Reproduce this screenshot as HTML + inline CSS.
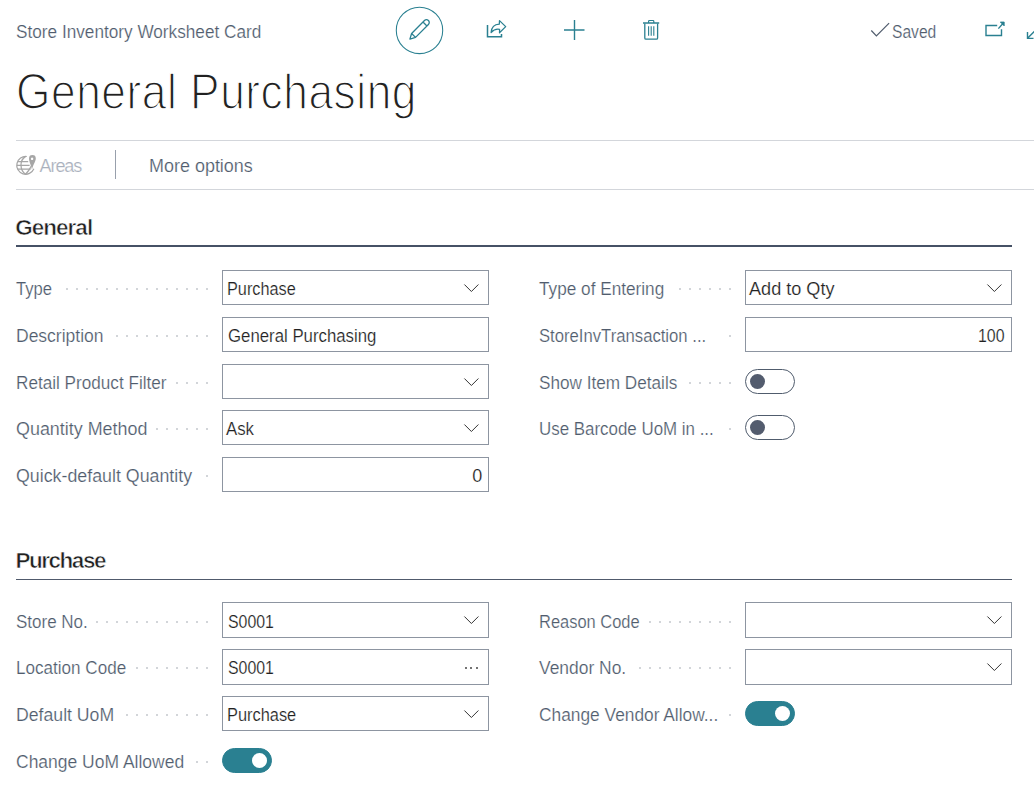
<!DOCTYPE html>
<html><head><meta charset="utf-8"><style>
html,body{margin:0;padding:0;background:#fff;width:1034px;height:791px;overflow:hidden;position:relative;font-family:"Liberation Sans",sans-serif;}
.t{position:absolute;white-space:nowrap;-webkit-text-stroke:0.2px #fff;}
.d{position:absolute;width:2px;height:2px;border-radius:1px;background:#c3c7cd;}
.ed{position:absolute;width:2px;height:2px;border-radius:1px;background:#444;}
.box{position:absolute;width:265px;height:33px;border:1px solid #8d95a1;}
.chev{position:absolute;}
.hl{position:absolute;height:1px;background:#d3d6db;}
.tg{position:absolute;width:48px;height:23px;border:1px solid #505c6d;border-radius:13px;box-sizing:content-box;}
.tg b{position:absolute;left:4px;top:4px;width:15px;height:15px;border-radius:50%;background:#535c6e;}
.tg.on{background:#2a8091;border-color:#2a8091;}
.tg.on b{left:29px;background:#fff;}
svg.ic{position:absolute;overflow:visible;}
</style></head><body>
<div class="hl" style="left:16px;top:140px;width:1018px"></div>
<div class="hl" style="left:16px;top:189px;width:1018px"></div>
<div style="position:absolute;left:115px;top:150px;width:1px;height:29px;background:#98a0ac"></div>
<div style="position:absolute;left:16px;top:245px;width:996px;height:2px;background:#465165"></div>
<div style="position:absolute;left:16px;top:579px;width:996px;height:1px;background:#505a6c"></div>
<svg class="ic" style="left:0;top:0" width="1034" height="200" viewBox="0 0 1034 200">
 <g fill="none" stroke="#2a8091" stroke-width="1.3" stroke-linejoin="round">
  <circle cx="419.5" cy="30.4" r="23.2" stroke-width="1.05"/>
  <g transform="translate(409.9,39.1) rotate(-45)">
   <path d="M0,0 L5.2,-2.8 L23.4,-2.8 A2.8,2.8 0 0 1 23.4,2.8 L5.2,2.8 Z M5.2,-2.8 L5.2,2.8 M21.3,-2.8 L21.3,2.8"/>
  </g>
  <path d="M487.5,25 L487.5,36.8 L501.5,36.8 L501.5,34" stroke-width="1.5" stroke-linejoin="miter"/>
  <path d="M491.1,32.5 C491.5,27 494.5,24.3 499.3,24.1 L499.5,20.6 L505.7,26.6 L499.5,32.8 L499.6,29.3 C496,28.6 493.5,29.8 491.1,32.5 Z" stroke-width="1.25"/>
  <path d="M574.5,20 L574.5,40 M564,30 L584.5,30" stroke-width="1.4"/>
  <path d="M643,23 L659.2,23" stroke-width="1.5"/>
  <path d="M648.6,23 L648.6,21.3 Q648.6,20.5 649.4,20.5 L653,20.5 Q653.8,20.5 653.8,21.3 L653.8,23" stroke-width="1.2"/>
  <path d="M644.8,23.5 L644.8,38 Q644.8,39.2 646,39.2 L656.4,39.2 Q657.6,39.2 657.6,38 L657.6,23.5" stroke-width="1.3"/>
  <path d="M648.6,26.2 L648.6,35.8 M651.2,26.2 L651.2,35.8 M653.8,26.2 L653.8,35.8" stroke-width="1.1"/>
  <path d="M997.2,25.5 L986,25.5 L986,35.5 L1001.5,35.5 L1001.5,29.2" stroke-width="1.4" stroke-linejoin="miter"/>
  <path d="M998.4,28.6 L1003.2,23.3" stroke-width="1.4"/>
  <path d="M1000.3,22 L1004.2,22 L1004.2,25.9 Z" fill="#2a8091" stroke-width="0.8"/>
  <path d="M1027.5,32 L1027.5,38.4 L1033.5,38.4 M1027.8,38 L1035,30.8" stroke-width="1.4" stroke-linejoin="miter"/>
 </g>
 <path d="M871.3,30.5 L876.4,35.8 L889.1,23.1" fill="none" stroke="#505c6d" stroke-width="1.2"/>
 <g fill="none" stroke="#a6a6a6" stroke-width="1.25">
  <path d="M26.8,156.5 A8.9,8.9 0 1 0 33.9,168.8"/>
  <path d="M18,161.5 L28.2,161.5 M16.6,165.3 L29.6,165.3 M17.6,169.1 L30.6,169.1"/>
  <path d="M25.5,156.6 C19.5,160 19.5,170 25.5,174.2 C29.5,170 30.5,168 31,166"/>
 </g>
 <path d="M32.4,155.1 A3.4,3.4 0 0 1 35.8,158.5 C35.8,161 33.4,164 32,169.6 C30.6,164 29,161 29,158.5 A3.4,3.4 0 0 1 32.4,155.1 Z M32.1,157.6 A1.2,1.2 0 1 0 32.11,157.6 Z" fill="#a6a6a6" fill-rule="evenodd" stroke="#fff" stroke-width="0.6" paint-order="stroke"/>
</svg>

<div class="t" style="left:15.50px;top:22.00px;font-size:18px;line-height:20px;letter-spacing:0.000px;color:#505c6d;transform:scaleX(0.9553296724695254);transform-origin:0 0;">Store Inventory Worksheet Card</div>
<div class="t" style="left:892.40px;top:22.00px;font-size:18px;line-height:20px;letter-spacing:0.000px;color:#505c6d;transform:scaleX(0.8681167940427199);transform-origin:0 0;">Saved</div>
<div class="t" style="left:15.50px;top:64.00px;font-size:50px;line-height:56px;letter-spacing:0.620px;color:#212121;-webkit-text-stroke:1.5px #fff;transform:scaleX(0.885);transform-origin:0 0;">General Purchasing</div>
<div class="t" style="left:39.60px;top:156.00px;font-size:18px;line-height:20px;letter-spacing:-1.095px;color:#a9b0bc;">Areas</div>
<div class="t" style="left:148.80px;top:156.00px;font-size:18px;line-height:20px;letter-spacing:0.000px;color:#505c6d;transform:scaleX(0.9976931949250288);transform-origin:0 0;">More options</div>
<div class="t" style="left:15.20px;top:215.00px;font-size:22.5px;line-height:25px;letter-spacing:-0.969px;color:#212121;font-weight:700;-webkit-text-stroke:0.6px #fff;">General</div>
<div class="t" style="left:15.50px;top:548.00px;font-size:22.5px;line-height:25px;letter-spacing:-1.480px;color:#212121;font-weight:700;-webkit-text-stroke:0.6px #fff;">Purchase</div>
<div class="t" style="left:15.50px;top:279.00px;font-size:18px;line-height:20px;letter-spacing:0.000px;color:#505c6d;transform:scaleX(0.9216589861751153);transform-origin:0 0;">Type</div>
<i class="d" style="left:206px;top:288px"></i>
<i class="d" style="left:196px;top:288px"></i>
<i class="d" style="left:186px;top:288px"></i>
<i class="d" style="left:176px;top:288px"></i>
<i class="d" style="left:166px;top:288px"></i>
<i class="d" style="left:156px;top:288px"></i>
<i class="d" style="left:146px;top:288px"></i>
<i class="d" style="left:136px;top:288px"></i>
<i class="d" style="left:126px;top:288px"></i>
<i class="d" style="left:116px;top:288px"></i>
<i class="d" style="left:106px;top:288px"></i>
<i class="d" style="left:96px;top:288px"></i>
<i class="d" style="left:86px;top:288px"></i>
<i class="d" style="left:76px;top:288px"></i>
<i class="d" style="left:66px;top:288px"></i>
<div class="t" style="left:15.50px;top:326.00px;font-size:18px;line-height:20px;letter-spacing:0.000px;color:#505c6d;transform:scaleX(0.9722222222222222);transform-origin:0 0;">Description</div>
<i class="d" style="left:206px;top:335px"></i>
<i class="d" style="left:196px;top:335px"></i>
<i class="d" style="left:186px;top:335px"></i>
<i class="d" style="left:176px;top:335px"></i>
<i class="d" style="left:166px;top:335px"></i>
<i class="d" style="left:156px;top:335px"></i>
<i class="d" style="left:146px;top:335px"></i>
<i class="d" style="left:136px;top:335px"></i>
<i class="d" style="left:126px;top:335px"></i>
<i class="d" style="left:116px;top:335px"></i>
<div class="t" style="left:15.50px;top:373.00px;font-size:18px;line-height:20px;letter-spacing:0.000px;color:#505c6d;transform:scaleX(0.9522905593520629);transform-origin:0 0;">Retail Product Filter</div>
<i class="d" style="left:206px;top:382px"></i>
<i class="d" style="left:196px;top:382px"></i>
<i class="d" style="left:186px;top:382px"></i>
<i class="d" style="left:176px;top:382px"></i>
<div class="t" style="left:15.50px;top:419.00px;font-size:18px;line-height:20px;letter-spacing:0.000px;color:#505c6d;transform:scaleX(0.9953072963972146);transform-origin:0 0;">Quantity Method</div>
<i class="d" style="left:206px;top:428px"></i>
<i class="d" style="left:196px;top:428px"></i>
<i class="d" style="left:186px;top:428px"></i>
<i class="d" style="left:176px;top:428px"></i>
<i class="d" style="left:166px;top:428px"></i>
<i class="d" style="left:156px;top:428px"></i>
<div class="t" style="left:15.50px;top:466.00px;font-size:18px;line-height:20px;letter-spacing:0.000px;color:#505c6d;transform:scaleX(0.9887148391443492);transform-origin:0 0;">Quick-default Quantity</div>
<i class="d" style="left:206px;top:475px"></i>
<div class="t" style="left:538.80px;top:279.00px;font-size:18px;line-height:20px;letter-spacing:0.000px;color:#505c6d;transform:scaleX(0.9554334554334555);transform-origin:0 0;">Type of Entering</div>
<i class="d" style="left:729px;top:288px"></i>
<i class="d" style="left:719px;top:288px"></i>
<i class="d" style="left:709px;top:288px"></i>
<i class="d" style="left:699px;top:288px"></i>
<i class="d" style="left:689px;top:288px"></i>
<i class="d" style="left:679px;top:288px"></i>
<div class="t" style="left:538.80px;top:326.00px;font-size:18px;line-height:20px;letter-spacing:0.000px;color:#505c6d;transform:scaleX(0.9265724577445277);transform-origin:0 0;">StoreInvTransaction ...</div>
<i class="d" style="left:729px;top:335px"></i>
<div class="t" style="left:538.80px;top:373.00px;font-size:18px;line-height:20px;letter-spacing:0.000px;color:#505c6d;transform:scaleX(0.9532671629445825);transform-origin:0 0;">Show Item Details</div>
<i class="d" style="left:729px;top:382px"></i>
<i class="d" style="left:719px;top:382px"></i>
<i class="d" style="left:709px;top:382px"></i>
<i class="d" style="left:699px;top:382px"></i>
<i class="d" style="left:689px;top:382px"></i>
<div class="t" style="left:538.80px;top:419.00px;font-size:18px;line-height:20px;letter-spacing:0.000px;color:#505c6d;transform:scaleX(0.9391790242854073);transform-origin:0 0;">Use Barcode UoM in ...</div>
<i class="d" style="left:729px;top:428px"></i>
<div class="t" style="left:15.50px;top:612.00px;font-size:18px;line-height:20px;letter-spacing:0.000px;color:#505c6d;transform:scaleX(0.9441157133464826);transform-origin:0 0;">Store No.</div>
<i class="d" style="left:206px;top:621px"></i>
<i class="d" style="left:196px;top:621px"></i>
<i class="d" style="left:186px;top:621px"></i>
<i class="d" style="left:176px;top:621px"></i>
<i class="d" style="left:166px;top:621px"></i>
<i class="d" style="left:156px;top:621px"></i>
<i class="d" style="left:146px;top:621px"></i>
<i class="d" style="left:136px;top:621px"></i>
<i class="d" style="left:126px;top:621px"></i>
<i class="d" style="left:116px;top:621px"></i>
<i class="d" style="left:106px;top:621px"></i>
<i class="d" style="left:96px;top:621px"></i>
<div class="t" style="left:15.50px;top:658.00px;font-size:18px;line-height:20px;letter-spacing:0.000px;color:#505c6d;transform:scaleX(0.9491817398794143);transform-origin:0 0;">Location Code</div>
<i class="d" style="left:206px;top:667px"></i>
<i class="d" style="left:196px;top:667px"></i>
<i class="d" style="left:186px;top:667px"></i>
<i class="d" style="left:176px;top:667px"></i>
<i class="d" style="left:166px;top:667px"></i>
<i class="d" style="left:156px;top:667px"></i>
<i class="d" style="left:146px;top:667px"></i>
<i class="d" style="left:136px;top:667px"></i>
<div class="t" style="left:15.50px;top:705.00px;font-size:18px;line-height:20px;letter-spacing:0.000px;color:#505c6d;transform:scaleX(0.981215027977618);transform-origin:0 0;">Default UoM</div>
<i class="d" style="left:206px;top:714px"></i>
<i class="d" style="left:196px;top:714px"></i>
<i class="d" style="left:186px;top:714px"></i>
<i class="d" style="left:176px;top:714px"></i>
<i class="d" style="left:166px;top:714px"></i>
<i class="d" style="left:156px;top:714px"></i>
<i class="d" style="left:146px;top:714px"></i>
<i class="d" style="left:136px;top:714px"></i>
<i class="d" style="left:126px;top:714px"></i>
<div class="t" style="left:15.50px;top:752.00px;font-size:18px;line-height:20px;letter-spacing:0.000px;color:#505c6d;transform:scaleX(0.9712832957762757);transform-origin:0 0;">Change UoM Allowed</div>
<i class="d" style="left:206px;top:761px"></i>
<i class="d" style="left:196px;top:761px"></i>
<div class="t" style="left:538.80px;top:612.00px;font-size:18px;line-height:20px;letter-spacing:0.000px;color:#505c6d;transform:scaleX(0.9139638411919687);transform-origin:0 0;">Reason Code</div>
<i class="d" style="left:729px;top:621px"></i>
<i class="d" style="left:719px;top:621px"></i>
<i class="d" style="left:709px;top:621px"></i>
<i class="d" style="left:699px;top:621px"></i>
<i class="d" style="left:689px;top:621px"></i>
<i class="d" style="left:679px;top:621px"></i>
<i class="d" style="left:669px;top:621px"></i>
<i class="d" style="left:659px;top:621px"></i>
<i class="d" style="left:649px;top:621px"></i>
<div class="t" style="left:538.80px;top:658.00px;font-size:18px;line-height:20px;letter-spacing:0.000px;color:#505c6d;transform:scaleX(0.9679209679209679);transform-origin:0 0;">Vendor No.</div>
<i class="d" style="left:729px;top:667px"></i>
<i class="d" style="left:719px;top:667px"></i>
<i class="d" style="left:709px;top:667px"></i>
<i class="d" style="left:699px;top:667px"></i>
<i class="d" style="left:689px;top:667px"></i>
<i class="d" style="left:679px;top:667px"></i>
<i class="d" style="left:669px;top:667px"></i>
<i class="d" style="left:659px;top:667px"></i>
<i class="d" style="left:649px;top:667px"></i>
<i class="d" style="left:639px;top:667px"></i>
<div class="t" style="left:538.80px;top:705.00px;font-size:18px;line-height:20px;letter-spacing:0.000px;color:#505c6d;transform:scaleX(0.9628196862239417);transform-origin:0 0;">Change Vendor Allow...</div>
<i class="d" style="left:729px;top:714px"></i>
<div class="box" style="left:222px;top:270px;height:33px"></div>
<svg class="chev" width="16" height="10" viewBox="0 0 16 10" style="left:463px;top:283px"><path d="M1.4 1.5 L8.4 8.5 L15.4 1.5" fill="none" stroke="#333" stroke-width="1"/></svg>
<div class="t" style="left:226.70px;top:279.00px;font-size:18px;line-height:20px;letter-spacing:0.000px;color:#212121;transform:scaleX(0.9033530571992111);transform-origin:0 0;">Purchase</div>
<div class="box" style="left:222px;top:317px;height:33px"></div>
<div class="t" style="left:227.50px;top:326.00px;font-size:18px;line-height:20px;letter-spacing:0.000px;color:#212121;transform:scaleX(0.9326294620412268);transform-origin:0 0;">General Purchasing</div>
<div class="box" style="left:222px;top:364px;height:33px"></div>
<svg class="chev" width="16" height="10" viewBox="0 0 16 10" style="left:463px;top:377px"><path d="M1.4 1.5 L8.4 8.5 L15.4 1.5" fill="none" stroke="#333" stroke-width="1"/></svg>
<div class="box" style="left:222px;top:410px;height:33px"></div>
<svg class="chev" width="16" height="10" viewBox="0 0 16 10" style="left:463px;top:423px"><path d="M1.4 1.5 L8.4 8.5 L15.4 1.5" fill="none" stroke="#333" stroke-width="1"/></svg>
<div class="t" style="left:226.20px;top:419.00px;font-size:18px;line-height:20px;letter-spacing:0.000px;color:#212121;transform:scaleX(0.9314703925482369);transform-origin:0 0;">Ask</div>
<div class="box" style="left:222px;top:457px;height:33px"></div>
<div class="t" style="left:472.20px;top:466.00px;font-size:18px;line-height:20px;letter-spacing:0.000px;color:#212121;">0</div>
<div class="box" style="left:745px;top:270px;height:33px"></div>
<svg class="chev" width="16" height="10" viewBox="0 0 16 10" style="left:986px;top:283px"><path d="M1.4 1.5 L8.4 8.5 L15.4 1.5" fill="none" stroke="#333" stroke-width="1"/></svg>
<div class="t" style="left:749.20px;top:279.00px;font-size:18px;line-height:20px;letter-spacing:0.000px;color:#212121;transform:scaleX(1.0052910052910053);transform-origin:0 0;">Add to Qty</div>
<div class="box" style="left:745px;top:317px;height:33px"></div>
<div class="t" style="left:978.20px;top:326.00px;font-size:18px;line-height:20px;letter-spacing:0.000px;color:#212121;transform:scaleX(0.8848968729208251);transform-origin:0 0;">100</div>
<div class="tg" style="left:745px;top:369px"><b></b></div>
<div class="tg" style="left:745px;top:415px"><b></b></div>
<div class="box" style="left:222px;top:602px;height:34px"></div>
<svg class="chev" width="16" height="10" viewBox="0 0 16 10" style="left:463px;top:615px"><path d="M1.4 1.5 L8.4 8.5 L15.4 1.5" fill="none" stroke="#333" stroke-width="1"/></svg>
<div class="t" style="left:227.60px;top:612.00px;font-size:18px;line-height:20px;letter-spacing:0.000px;color:#212121;transform:scaleX(0.8823529411764707);transform-origin:0 0;">S0001</div>
<div class="box" style="left:222px;top:649px;height:34px"></div>
<i class="ed" style="left:464.50px;top:666.5px"></i>
<i class="ed" style="left:470.35px;top:666.5px"></i>
<i class="ed" style="left:476.20px;top:666.5px"></i>
<div class="t" style="left:227.60px;top:658.00px;font-size:18px;line-height:20px;letter-spacing:0.000px;color:#212121;transform:scaleX(0.8823529411764707);transform-origin:0 0;">S0001</div>
<div class="box" style="left:222px;top:696px;height:33px"></div>
<svg class="chev" width="16" height="10" viewBox="0 0 16 10" style="left:463px;top:709px"><path d="M1.4 1.5 L8.4 8.5 L15.4 1.5" fill="none" stroke="#333" stroke-width="1"/></svg>
<div class="t" style="left:226.50px;top:705.00px;font-size:18px;line-height:20px;letter-spacing:0.000px;color:#212121;transform:scaleX(0.9099276791584484);transform-origin:0 0;">Purchase</div>
<div class="tg on" style="left:222px;top:748px"><b></b></div>
<div class="box" style="left:745px;top:602px;height:34px"></div>
<svg class="chev" width="16" height="10" viewBox="0 0 16 10" style="left:986px;top:615px"><path d="M1.4 1.5 L8.4 8.5 L15.4 1.5" fill="none" stroke="#333" stroke-width="1"/></svg>
<div class="box" style="left:745px;top:649px;height:34px"></div>
<svg class="chev" width="16" height="10" viewBox="0 0 16 10" style="left:986px;top:662px"><path d="M1.4 1.5 L8.4 8.5 L15.4 1.5" fill="none" stroke="#333" stroke-width="1"/></svg>
<div class="tg on" style="left:745px;top:701px"><b></b></div>
</body></html>
